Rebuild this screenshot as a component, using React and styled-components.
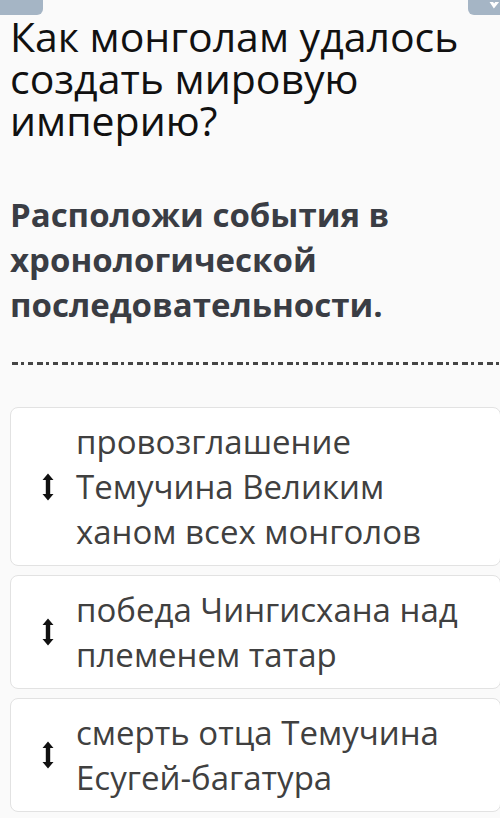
import React from 'react';
import styled, { createGlobalStyle } from 'styled-components';

const GlobalStyle = createGlobalStyle`
  html, body {
    margin: 0;
    padding: 0;
    background: #fafafa;
    font-family: 'Open Sans', 'Noto Sans', sans-serif;
  }
`;

const Page = styled.div`
  width: 500px;
  height: 818px;
  overflow: hidden;
  display: flex;
  flex-direction: column;
`;

const TopBar = styled.div`
  display: flex;
  justify-content: space-between;
  height: 15px;
`;

const TopButton = styled.div`
  width: ${(p) => p.w}px;
  height: 15px;
  background: #a5b5c5;
  border-radius: ${(p) => (p.right ? '0 0 0 6px' : '0 0 6px 0')};
  position: relative;
  overflow: hidden;
`;

const Title = styled.h1`
  margin: 0;
  padding: 0 0 0 10px;
  font-size: 41px;
  line-height: 42px;
  font-weight: 400;
  color: #111;
`;

const Instruction = styled.h2`
  margin: 51px 0 0;
  padding: 0 0 0 10px;
  font-size: 33px;
  line-height: 45px;
  font-weight: 700;
  color: #3a3d44;
`;

const AnswerLine = styled.div`
  margin: 35px 0 0 12px;
  height: 3px;
  background: repeating-linear-gradient(
    90deg,
    #444 0 6px,
    transparent 6px 9px,
    #444 9px 12px,
    transparent 12px 16px,
    #444 16px 21px,
    transparent 21px 25px
  );
`;

const List = styled.div`
  display: flex;
  flex-direction: column;
  gap: 9px;
  margin: 42px 0 0 10px;
`;

const Card = styled.div`
  display: flex;
  align-items: center;
  gap: 22px;
  padding: 11px 20px 11px 31px;
  margin-right: -1px;
  background: #fff;
  border: 1px solid #e2e2e2;
  border-radius: 8px;
`;

const CardText = styled.div`
  font-size: 33px;
  line-height: 45px;
  color: #404040;
`;

const Handle = () => (
  <svg width="12" height="28" viewBox="0 0 12 28" style={{ flexShrink: 0 }}>
    <path d="M6 0.5 L11.5 7 L8.2 7 L8.2 21 L11.5 21 L6 27.5 L0.5 21 L3.8 21 L3.8 7 L0.5 7 Z" fill="#111" />
  </svg>
);

const events = [
  'провозглашение Темучина Великим ханом всех монголов',
  'победа Чингисхана над племенем татар',
  'смерть отца Темучина Есугей-багатура',
];

export default function App() {
  return (
    <Page>
      <GlobalStyle />
      <TopBar>
        <TopButton w={43} />
        <TopButton w={32} right>
          <svg width="32" height="15" viewBox="0 0 32 15">
            <path d="M22 -2 L26 4 L34 -6" stroke="#fff" strokeWidth="3" fill="none" />
          </svg>
        </TopButton>
      </TopBar>
      <Title>Как монголам удалось создать мировую империю?</Title>
      <Instruction>Расположи события в хронологической последовательности.</Instruction>
      <AnswerLine />
      <List>
        {events.map((e) => (
          <Card key={e}>
            <Handle />
            <CardText>{e}</CardText>
          </Card>
        ))}
      </List>
    </Page>
  );
}
